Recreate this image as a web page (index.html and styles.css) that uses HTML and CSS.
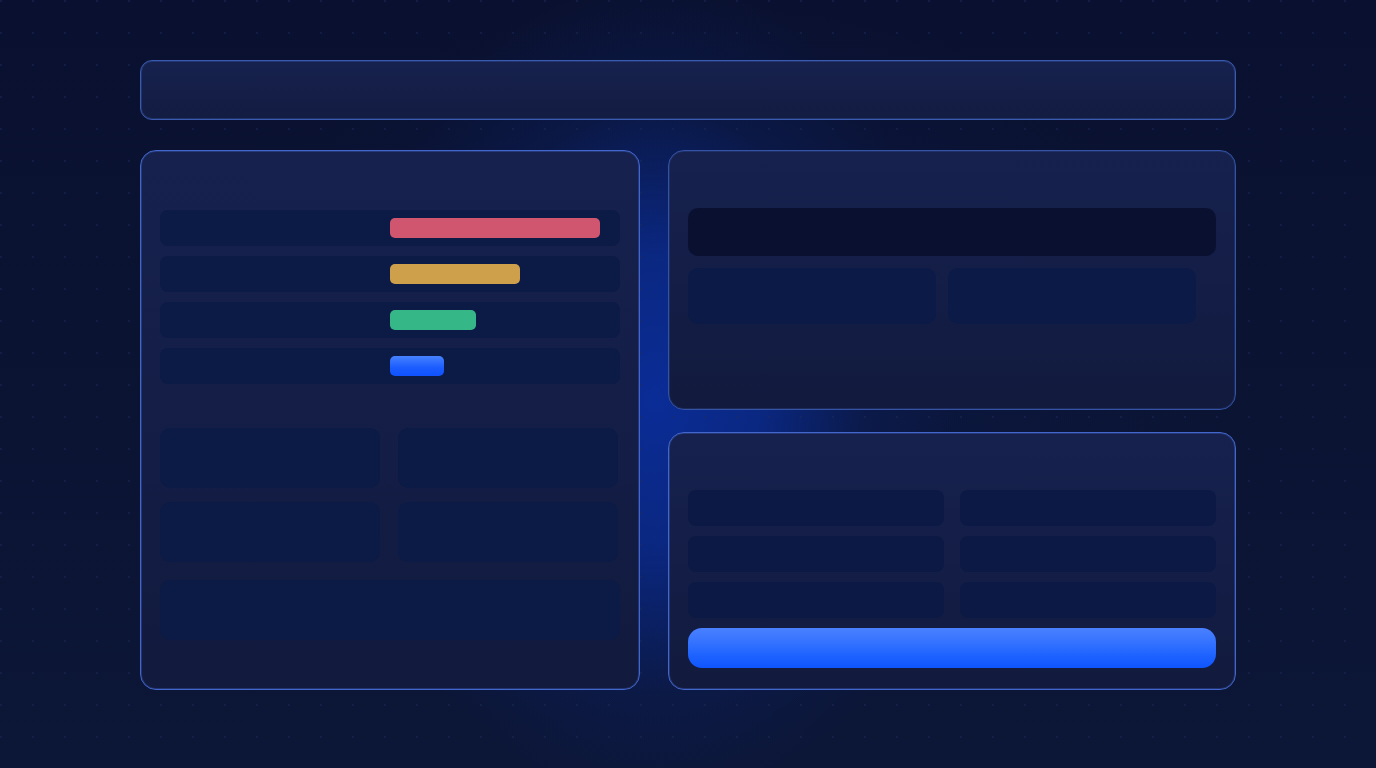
FILE: index.html
```html
<!DOCTYPE html>
<html lang="en">
<head>
<meta charset="utf-8">
<title>Dashboard skeleton</title>
<link rel="stylesheet" href="styles.css">
</head>
<body>
<div class="page">
  <header class="topbar"></header>
  <main class="layout">
    <section class="panel panel-left">
      <div class="rows">
        <div class="row"><span class="bar bar-red" style="width:210px"></span></div>
        <div class="row"><span class="bar bar-yellow" style="width:130px"></span></div>
        <div class="row"><span class="bar bar-green" style="width:86px"></span></div>
        <div class="row"><span class="bar bar-blue" style="width:54px"></span></div>
      </div>
      <div class="tiles">
        <div class="tile"></div>
        <div class="tile"></div>
        <div class="tile"></div>
        <div class="tile"></div>
      </div>
      <div class="wide-tile"></div>
    </section>
    <div class="right-col">
      <section class="panel panel-top">
        <div class="input-dark"></div>
        <div class="pair">
          <div class="pair-cell"></div>
          <div class="pair-cell"></div>
        </div>
      </section>
      <section class="panel panel-bottom">
        <div class="cells">
          <div class="cell"></div>
          <div class="cell"></div>
          <div class="cell"></div>
          <div class="cell"></div>
          <div class="cell"></div>
          <div class="cell"></div>
        </div>
        <div class="action"></div>
      </section>
    </div>
  </main>
</div>
</body>
</html>
```

FILE: styles.css
```css
* { box-sizing: border-box; }

html, body {
  margin: 0;
  height: 100%;
}

body {
  width: 1376px;
  height: 768px;
  overflow: hidden;
  font-family: "Inter", "Liberation Sans", sans-serif;
  background-color: #0b1330;
  background-image:
    radial-gradient(circle, rgba(30, 44, 92, 0.45) 0.8px, transparent 1.3px),
    radial-gradient(ellipse 300px 420px at 655px 400px, rgba(10, 44, 150, 1) 0%, rgba(10, 42, 140, 0.85) 35%, rgba(11, 30, 90, 0.4) 70%, rgba(11, 19, 48, 0) 100%),
    radial-gradient(ellipse 520px 380px at 700px 380px, rgba(12, 30, 90, 0.45) 0%, rgba(11, 19, 48, 0) 100%),
    linear-gradient(180deg, #0a1130 0%, #0c1636 100%);
  background-size: 32px 32px, 100% 100%, 100% 100%, 100% 100%;
  background-position: -15px -15px, 0 0, 0 0, 0 0;
}

.page {
  padding: 60px 0 0 140px;
  width: 1236px;
}

.topbar {
  height: 60px;
  border: 1px solid #3a5aaf;
  box-shadow: inset 0 0 0 1px rgba(58, 90, 175, 0.35);
  border-radius: 12px;
  background: linear-gradient(180deg, #16214e 0%, #131c41 100%);
}

.layout {
  margin-top: 30px;
  display: grid;
  grid-template-columns: 500px 568px;
  column-gap: 28px;
}

.panel {
  border: 1px solid #4266cc;
  box-shadow: inset 0 0 0 1px rgba(66, 102, 204, 0.35);
  border-radius: 16px;
  background: linear-gradient(180deg, #16214e 0%, #131d45 60%, #121a3d 100%);
}

.panel-left {
  height: 540px;
  padding: 59px 19px 0;
}

.rows {
  display: flex;
  flex-direction: column;
  gap: 10px;
}

.row {
  height: 36px;
  border-radius: 8px;
  background: #0c1a46;
  padding: 8px 0 0 230px;
}

.bar {
  display: block;
  height: 20px;
  border-radius: 5px;
}

.bar-red { background: #d0566f; }
.bar-yellow { background: #cfa04c; }
.bar-green { background: #36b787; }
.bar-blue { background: linear-gradient(180deg, #4682ff 0%, #1a5cff 60%, #0f52ff 100%); }

.tiles {
  margin-top: 44px;
  width: 458px;
  display: grid;
  grid-template-columns: 220px 220px;
  column-gap: 18px;
  row-gap: 14px;
}

.tile {
  height: 60px;
  border-radius: 10px;
  background: #0c1a46;
}

.wide-tile {
  margin-top: 18px;
  height: 60px;
  border-radius: 10px;
  background: #0c1a46;
}

.right-col {
  display: flex;
  flex-direction: column;
  gap: 22px;
}

.panel-top {
  height: 260px;
  padding: 57px 19px 0;
  border-color: #3453a4;
  box-shadow: inset 0 0 0 1px rgba(52, 83, 164, 0.3);
}

.input-dark {
  height: 48px;
  border-radius: 10px;
  background: #0a1130;
}

.pair {
  margin-top: 12px;
  display: flex;
  gap: 12px;
}

.pair-cell {
  width: 248px;
  height: 56px;
  border-radius: 10px;
  background: #0c1a47;
}

.panel-bottom {
  height: 258px;
  padding: 57px 19px 0;
}

.cells {
  display: grid;
  grid-template-columns: 256px 256px;
  column-gap: 16px;
  row-gap: 10px;
}

.cell {
  height: 36px;
  border-radius: 8px;
  background: #0c1944;
}

.action {
  margin-top: 10px;
  height: 40px;
  border-radius: 14px;
  background: linear-gradient(180deg, #4a80ff 0%, #3573ff 35%, #1d62ff 70%, #0f55ff 100%);
}
```
